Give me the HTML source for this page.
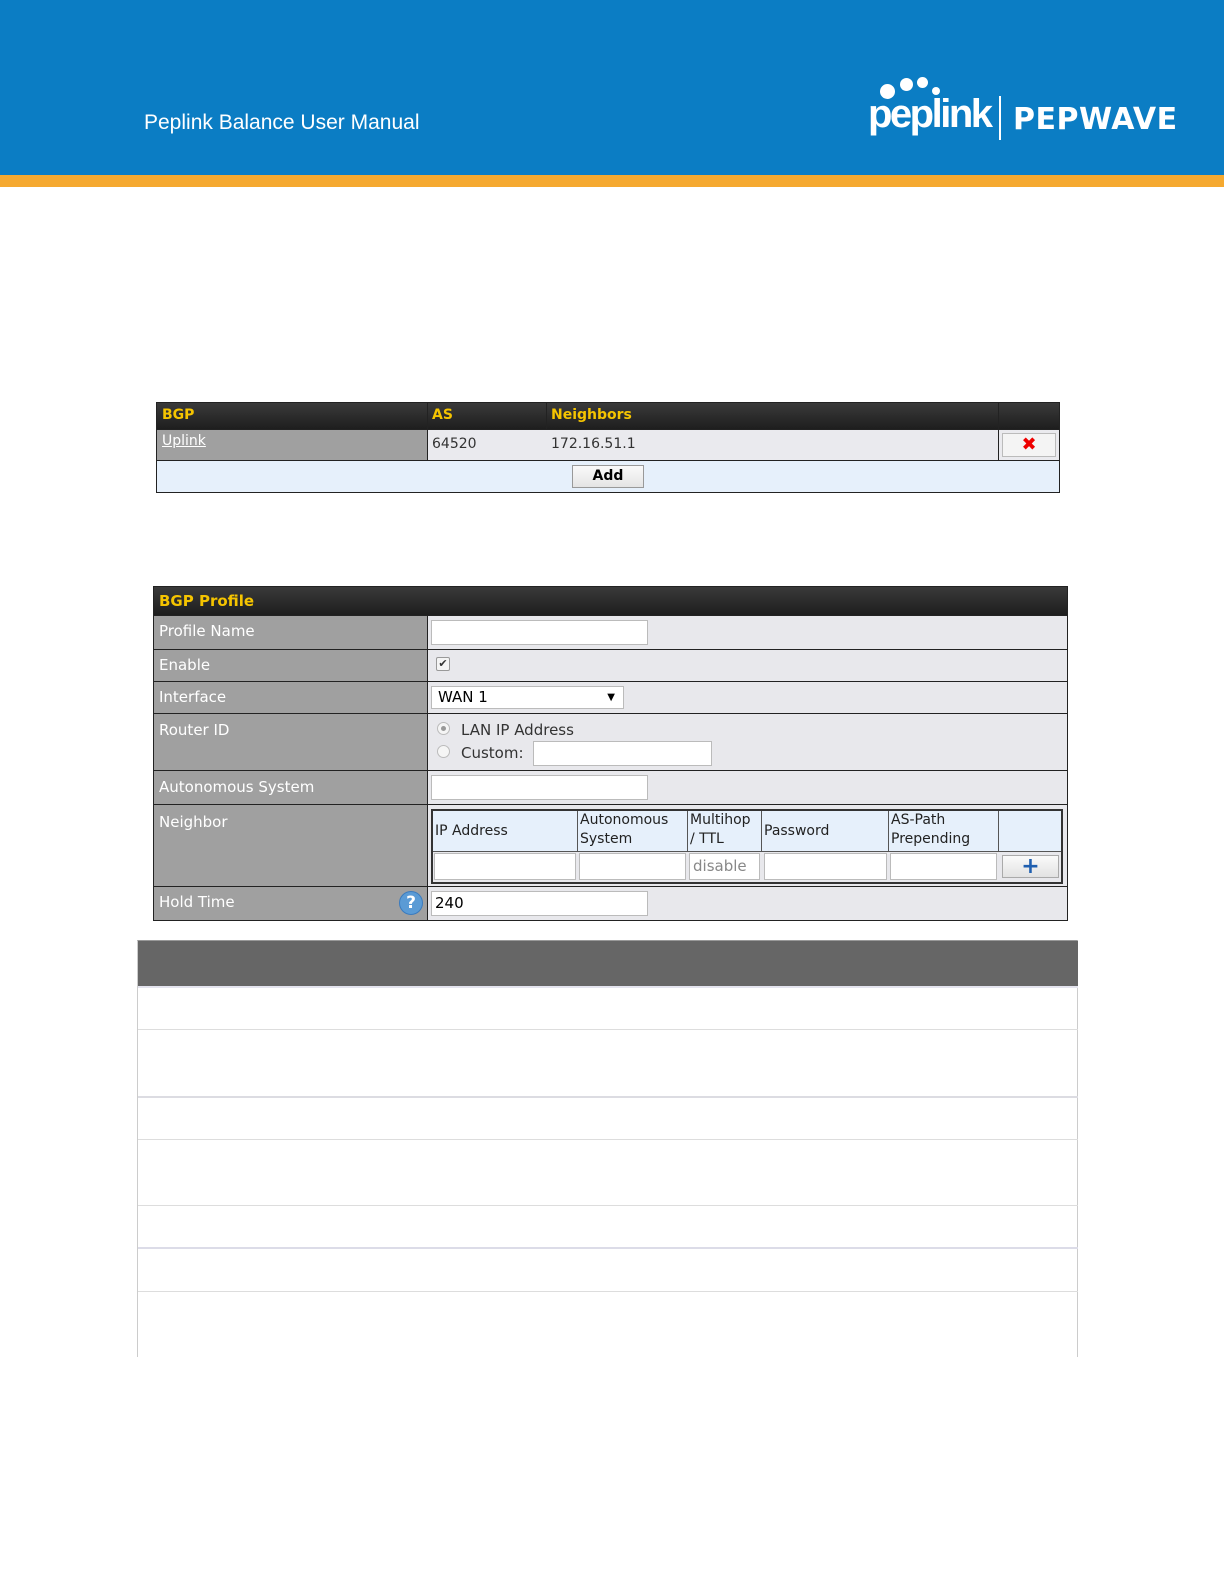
<!DOCTYPE html>
<html><head><meta charset="utf-8"><style>
body{margin:0;width:1224px;height:1584px;background:#fff;position:relative;font-family:"DejaVu Sans","Liberation Sans",sans-serif;overflow:hidden}
.a{position:absolute;box-sizing:border-box}
.hd{background:linear-gradient(#3a3a3a,#1e1e1e);color:#f5c400;font-weight:bold;font-size:14px;line-height:27px;padding-left:5px}
.lab{background:#a0a0a0;color:#fff;font-size:14px;padding-left:5px;border-right:1px solid #222}
.val{background:#e8e8ec}
.inp{background:#fff;border:1px solid #bbb;font-size:14px;padding-left:3px}
.line{background:#222}
.nh{background:#e6f0fb;font-size:14px;color:#222;border-right:1px solid #555;line-height:19px;padding-left:2px;white-space:nowrap}
</style></head><body>
<div class="a" style="left:0;top:0;width:1224px;height:175px;background:#0b7dc4"></div>
<div class="a" style="left:0;top:175px;width:1224px;height:12px;background:#f5a930"></div>
<div class="a" style="left:144px;top:111px;color:#fff;font-size:21px;font-family:'Liberation Sans',sans-serif">Peplink Balance User Manual</div>
<div class="a" style="left:880px;top:84px;width:15px;height:15px;border-radius:50%;background:#fff"></div>
<div class="a" style="left:900px;top:78px;width:13px;height:13px;border-radius:50%;background:#fff"></div>
<div class="a" style="left:917px;top:77px;width:11px;height:11px;border-radius:50%;background:#fff"></div>
<div class="a" style="left:932px;top:87px;width:8px;height:8px;border-radius:50%;background:#fff"></div>
<div class="a" style="left:868px;top:92px;color:#fff;font-size:40px;font-weight:bold;letter-spacing:-2.5px;font-family:'Liberation Sans',sans-serif">peplink</div>
<div class="a" style="left:999px;top:96px;width:2px;height:44px;background:#fff"></div>
<div class="a" style="left:1013px;top:102px;color:#fff;font-size:30px;font-weight:bold;letter-spacing:0.5px;font-family:'DejaVu Sans',sans-serif">PEPWAVE</div>

<!-- table 1 -->
<div class="a" style="left:156px;top:402px;width:904px;height:91px;border:1px solid #222;background:#e6f0fb"></div>
<div class="a hd" style="left:157px;top:403px;width:902px;height:26px;line-height:25px">BGP</div>
<div class="a hd" style="left:427px;top:403px;width:120px;height:26px;line-height:25px;background:none">AS</div>
<div class="a hd" style="left:546px;top:403px;width:120px;height:26px;line-height:25px;background:none">Neighbors</div>
<div class="a" style="left:427px;top:403px;width:1px;height:58px;background:#222"></div>
<div class="a" style="left:546px;top:403px;width:1px;height:58px;background:#222"></div>
<div class="a" style="left:998px;top:403px;width:1px;height:58px;background:#222"></div>
<div class="a" style="left:157px;top:429px;width:270px;height:32px;background:#a0a0a0;color:#fff;font-size:14px;padding:4px 5px;text-decoration:underline">Uplink</div>
<div class="a" style="left:428px;top:429px;width:570px;height:32px;background:#eaeaee;font-size:14px;color:#333;padding:7px 4px">64520</div>
<div class="a" style="left:547px;top:429px;width:451px;height:32px;font-size:14px;color:#333;padding:7px 4px">172.16.51.1</div>
<div class="a" style="left:999px;top:429px;width:60px;height:32px;background:#eaeaee"></div>
<div class="a" style="left:1002px;top:433px;width:54px;height:24px;background:#f4f4f4;border:1px solid #bbb;color:#e00;font-weight:bold;font-size:18px;text-align:center;line-height:22px">✖</div>
<div class="a line" style="left:157px;top:429px;width:902px;height:1px"></div>
<div class="a line" style="left:157px;top:460px;width:902px;height:1px"></div>
<div class="a" style="left:572px;top:465px;width:72px;height:23px;background:linear-gradient(#fafafa,#e4e4e4);border:1px solid #999;font-size:14px;font-weight:bold;text-align:center;line-height:21px">Add</div>

<!-- table 2 -->
<div class="a" style="left:153px;top:586px;width:915px;height:335px;border:1px solid #222;background:#e8e8ec"></div>
<div class="a hd" style="left:154px;top:587px;width:913px;height:28px;font-size:15px;line-height:28px">BGP Profile</div>
<div class="a lab" style="left:154px;top:615px;width:274px;height:305px"></div>
<div class="a" style="left:159px;top:622px;color:#fff;font-size:15px">Profile Name</div>
<div class="a" style="left:159px;top:656px;color:#fff;font-size:15px">Enable</div>
<div class="a" style="left:159px;top:688px;color:#fff;font-size:15px">Interface</div>
<div class="a" style="left:159px;top:721px;color:#fff;font-size:15px">Router ID</div>
<div class="a" style="left:159px;top:778px;color:#fff;font-size:15px">Autonomous System</div>
<div class="a" style="left:159px;top:813px;color:#fff;font-size:15px">Neighbor</div>
<div class="a" style="left:159px;top:893px;color:#fff;font-size:15px">Hold Time</div>
<div class="a line" style="left:154px;top:615px;width:913px;height:1px"></div>
<div class="a line" style="left:154px;top:649px;width:913px;height:1px"></div>
<div class="a line" style="left:154px;top:681px;width:913px;height:1px"></div>
<div class="a line" style="left:154px;top:713px;width:913px;height:1px"></div>
<div class="a line" style="left:154px;top:770px;width:913px;height:1px"></div>
<div class="a line" style="left:154px;top:804px;width:913px;height:1px"></div>
<div class="a line" style="left:154px;top:886px;width:913px;height:1px"></div>
<div class="a inp" style="left:431px;top:620px;width:217px;height:25px"></div>
<div class="a" style="left:436px;top:657px;width:14px;height:14px;border:1px solid #999;border-radius:2px;background:#f4f4f4;font-size:11px;line-height:12px;text-align:center;color:#333">✔</div>
<div class="a inp" style="left:431px;top:686px;width:193px;height:23px;font-size:15px;line-height:21px;padding-left:6px">WAN 1<span style="position:absolute;right:8px;font-size:10px">▼</span></div>
<div class="a" style="left:437px;top:722px;width:13px;height:13px;border:1px solid #bbb;border-radius:50%;background:#f5f5f5"><div style="margin:3px;width:5px;height:5px;border-radius:50%;background:#999"></div></div>
<div class="a" style="left:437px;top:745px;width:13px;height:13px;border:1px solid #bbb;border-radius:50%;background:#f5f5f5"></div>
<div class="a" style="left:461px;top:721px;font-size:15px;color:#333">LAN IP Address</div>
<div class="a" style="left:461px;top:744px;font-size:15px;color:#333">Custom:</div>
<div class="a inp" style="left:533px;top:741px;width:179px;height:25px"></div>
<div class="a inp" style="left:431px;top:775px;width:217px;height:25px"></div>
<!-- neighbor -->
<div class="a" style="left:431px;top:809px;width:632px;height:75px;border:2px solid #333;background:#e6f0fb"></div>
<div class="a nh" style="left:433px;top:811px;width:145px;height:40px;line-height:40px">IP Address</div>
<div class="a nh" style="left:578px;top:811px;width:110px;height:40px">Autonomous<br>System</div>
<div class="a nh" style="left:688px;top:811px;width:74px;height:40px">Multihop<br>/ TTL</div>
<div class="a nh" style="left:762px;top:811px;width:127px;height:40px;line-height:40px">Password</div>
<div class="a nh" style="left:889px;top:811px;width:110px;height:40px">AS-Path<br>Prepending</div>
<div class="a line" style="left:433px;top:851px;width:628px;height:1px;background:#555"></div>
<div class="a" style="left:433px;top:852px;width:628px;height:30px;background:#e8e8ec"></div>
<div class="a inp" style="left:434px;top:853px;width:142px;height:27px"></div>
<div class="a inp" style="left:579px;top:853px;width:107px;height:27px"></div>
<div class="a inp" style="left:689px;top:853px;width:71px;height:27px;color:#888;font-size:15px;line-height:25px;padding-left:3px">disable</div>
<div class="a inp" style="left:764px;top:853px;width:123px;height:27px"></div>
<div class="a inp" style="left:890px;top:853px;width:107px;height:27px"></div>
<div class="a" style="left:1002px;top:855px;width:57px;height:23px;background:linear-gradient(#fafafa,#e2e2e2);border:1px solid #aaa;color:#1f5fb0;font-weight:bold;font-size:22px;text-align:center;line-height:21px">+</div>
<div class="a" style="left:399px;top:891px;width:24px;height:24px;border-radius:50%;background:#5b9bd5;border:1px solid #3a7bbf;color:#fff;font-weight:bold;font-size:17px;text-align:center;line-height:22px">?</div>
<div class="a inp" style="left:431px;top:891px;width:217px;height:25px;font-size:15px;line-height:23px">240</div>

<!-- bottom table -->
<div class="a" style="left:137px;top:940px;width:941px;height:417px;border:1px solid #ccc;border-top:1px solid #999;border-bottom:none"></div>
<div class="a" style="left:138px;top:941px;width:940px;height:45px;background:#666"></div>
<div class="a" style="left:138px;top:986px;width:940px;height:2px;background:#e4e4ee"></div>
<div class="a" style="left:138px;top:1029px;width:940px;height:1px;background:#ddd"></div>
<div class="a" style="left:138px;top:1096px;width:940px;height:2px;background:#dcdce2"></div>
<div class="a" style="left:138px;top:1139px;width:940px;height:1px;background:#ddd"></div>
<div class="a" style="left:138px;top:1205px;width:940px;height:1px;background:#ddd"></div>
<div class="a" style="left:138px;top:1247px;width:940px;height:2px;background:#dcdce8"></div>
<div class="a" style="left:138px;top:1291px;width:940px;height:1px;background:#ddd"></div>
</body></html>
